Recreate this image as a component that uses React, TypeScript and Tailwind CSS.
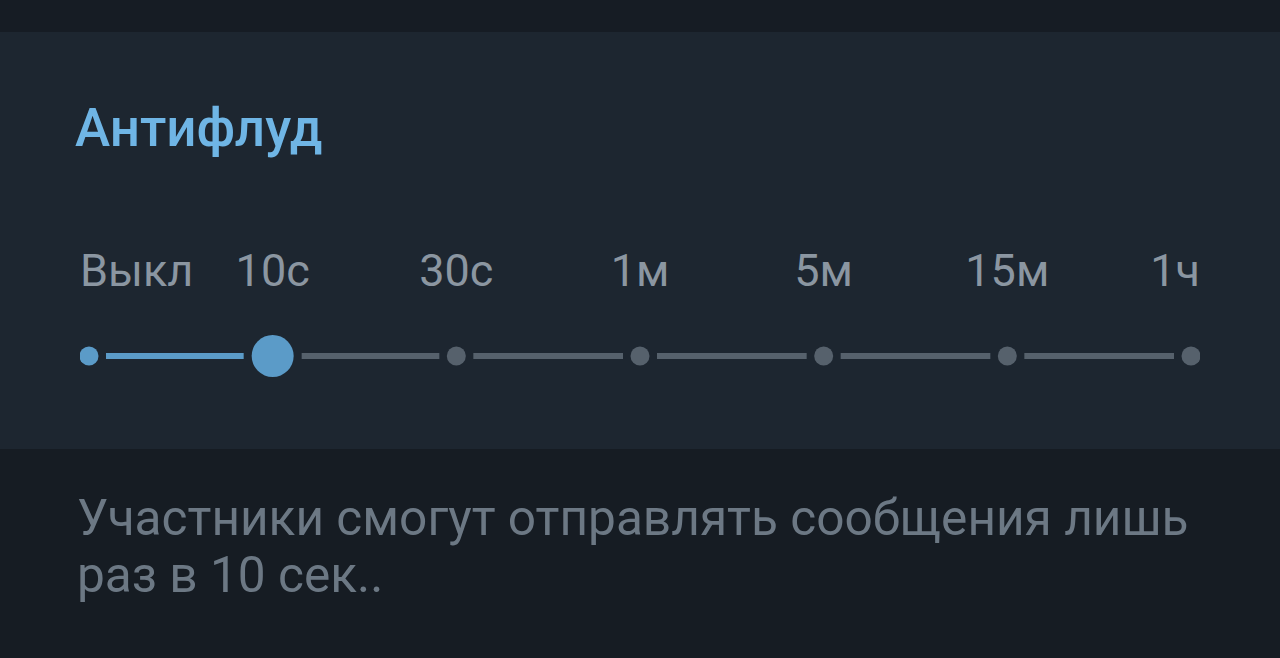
const STEPS = ['Выкл', '10с', '30с', '1м', '5м', '15м', '1ч']
const ACTIVE = 1

// track geometry (px)
const TRACK_W = 1120
const START = 9
const STEP = (TRACK_W - 2 * START) / (STEPS.length - 1)
const CY = 22

function Track() {
  const xs = STEPS.map((_, i) => START + i * STEP)
  return (
    <svg width={TRACK_W} height={44} viewBox={`0 0 ${TRACK_W} 44`} className="block">
      {xs.slice(0, -1).map((x, i) => {
        const next = xs[i + 1]
        const r1 = i === ACTIVE ? 21 : 9
        const r2 = i + 1 === ACTIVE ? 21 : 9
        const on = i < ACTIVE
        return (
          <rect
            key={'l' + i}
            x={x + r1 + 8}
            y={CY - 3}
            width={next - x - r1 - r2 - 16}
            height={6}
            fill={on ? '#5b9bc8' : '#56616c'}
          />
        )
      })}
      {xs.map((x, i) => (
        <circle
          key={'d' + i}
          cx={x}
          cy={CY}
          r={i === ACTIVE ? 21 : 9.5}
          fill={i <= ACTIVE ? '#5b9bc8' : '#56616c'}
        />
      ))}
    </svg>
  )
}

export default function App() {
  return (
    <div className="w-[1280px] h-[658px] bg-[#161c23] font-['Roboto',sans-serif] overflow-hidden">
      <div className="h-[32px] bg-[#161c24]" />

      <section className="bg-[#1d2630] pt-[65px] pb-[71px]">
        <h1 className="pl-[75px] text-[53px] leading-[62px] font-medium text-[#6fb5e5]">
          Антифлуд
        </h1>

        <div className="ml-[80px] w-[1120px] mt-[85px]">
          {/* labels, centred over their dots */}
          <div className="flex h-[53px] pl-[9px]" style={{ gap: `${STEP}px` }}>
            {STEPS.map((s, i) => (
              <div
                key={s}
                className={
                  'w-0 flex whitespace-nowrap text-[45px] leading-[53px] text-[#8b96a1] ' +
                  (i === 0 ? 'justify-start -ml-[9px] mr-[9px]' : i === STEPS.length - 1 ? 'justify-end ml-[9px]' : 'justify-center')
                }
              >
                {s}
              </div>
            ))}
          </div>

          <div className="mt-[37px]">
            <Track />
          </div>
        </div>
      </section>

      <p className="pt-[41px] pl-[77px] pr-[60px] text-[49.6px] leading-[57px] text-[#6c7884]">
        Участники смогут отправлять сообщения лишь раз в 10 сек..
      </p>
    </div>
  )
}
